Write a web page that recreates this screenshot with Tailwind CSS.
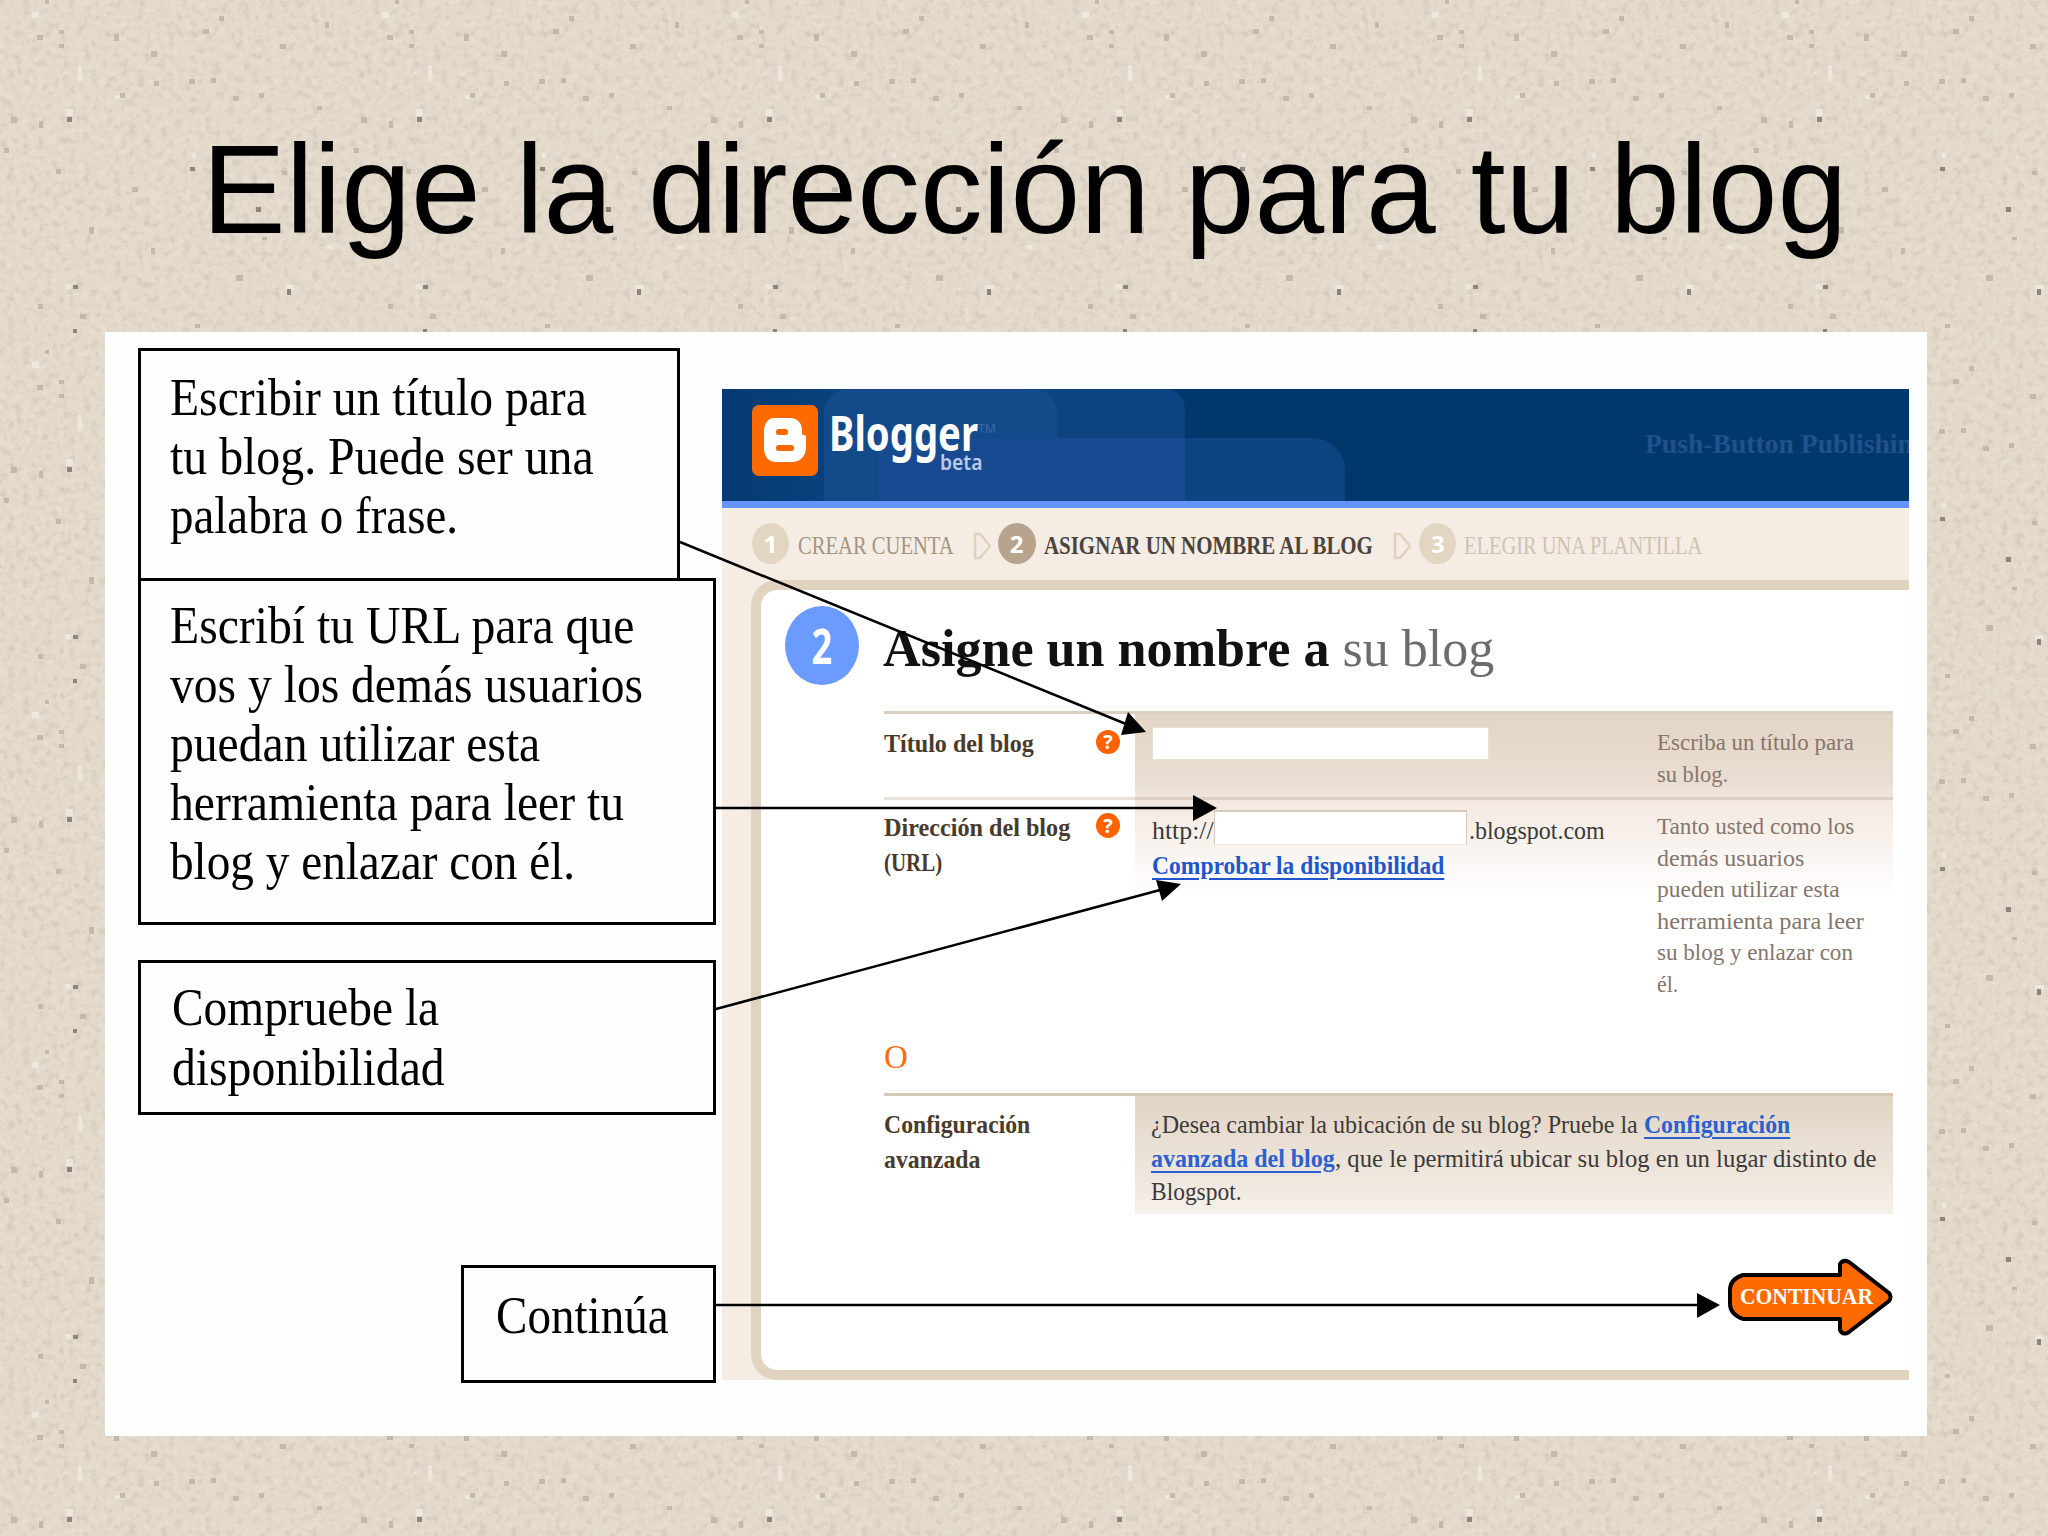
<!DOCTYPE html>
<html lang="es">
<head>
  <meta charset="UTF-8" />
  <meta name="viewport" content="width=device-width, initial-scale=1.0" />
  <title>Elige la dirección para tu blog</title>
  <script src="https://cdn.jsdelivr.net/npm/@tailwindcss/browser@4"></script>
</head>
<body class="relative w-[2048px] h-[1536px] overflow-hidden bg-[#e3dacc] font-['Liberation_Serif',serif] text-black">
  <!-- paper texture -->
  <svg class="absolute inset-0" width="2048" height="1536">
    <defs>
      <filter id="grain" x="0" y="0" width="100%" height="100%" color-interpolation-filters="sRGB">
        <feTurbulence type="fractalNoise" baseFrequency="0.13" numOctaves="3" seed="4" stitchTiles="stitch" />
        <feColorMatrix values="0 0 0 0 0.55  0 0 0 0 0.5  0 0 0 0 0.43  0.5 0 0 0 -0.24" />
      </filter>
      <filter id="light" x="0" y="0" width="100%" height="100%" color-interpolation-filters="sRGB">
        <feTurbulence type="fractalNoise" baseFrequency="0.14" numOctaves="3" seed="9" stitchTiles="stitch" />
        <feColorMatrix values="0 0 0 0 0.95  0 0 0 0 0.92  0 0 0 0 0.86  0 0.9 0 0 -0.43" />
      </filter>
      <pattern id="paper" width="350" height="350" patternUnits="userSpaceOnUse">
        <rect width="350" height="350" filter="url(#grain)" />
        <rect width="350" height="350" filter="url(#light)" />
        <g fill="#eee8da">
          <rect x="66" y="109" width="7" height="7" /><rect x="78" y="65" width="4" height="16" /><rect x="66" y="284" width="5" height="5" />
          <rect x="285" y="285" width="9" height="5" /><rect x="192" y="153" width="4" height="5" /><rect x="327" y="245" width="6" height="4" />
          <rect x="32" y="12" width="7" height="6" /><rect x="115" y="95" width="7" height="4" />
        </g>
        <g fill="#8d8578">
          <rect x="67" y="117" width="5" height="5" /><rect x="73" y="285" width="5" height="4" /><rect x="287" y="289" width="4" height="6" />
          <rect x="256" y="207" width="5" height="5" /><rect x="190" y="167" width="5" height="4" /><rect x="73" y="329" width="4" height="4" />
        </g>
        <g fill="#c2b9aa">
          <rect x="11" y="117" width="6" height="6" /><rect x="39" y="121" width="4" height="7" /><rect x="151" y="51" width="6" height="6" />
          <rect x="189" y="79" width="6" height="5" /><rect x="211" y="78" width="5" height="5" /><rect x="37" y="35" width="6" height="5" />
          <rect x="59" y="30" width="5" height="4" /><rect x="59" y="44" width="5" height="4" /><rect x="114" y="34" width="5" height="7" />
          <rect x="154" y="81" width="5" height="5" /><rect x="120" y="93" width="5" height="5" /><rect x="233" y="96" width="6" height="5" />
          <rect x="4" y="148" width="5" height="5" /><rect x="56" y="169" width="5" height="5" /><rect x="132" y="187" width="6" height="5" />
          <rect x="89" y="227" width="5" height="7" /><rect x="151" y="248" width="4" height="6" /><rect x="236" y="275" width="7" height="6" />
          <rect x="38" y="304" width="5" height="5" /><rect x="80" y="314" width="6" height="5" /><rect x="203" y="29" width="6" height="5" />
          <rect x="219" y="16" width="5" height="5" /><rect x="325" y="22" width="4" height="6" /><rect x="280" y="44" width="6" height="5" />
          <rect x="45" y="0" width="4" height="4" /><rect x="282" y="171" width="5" height="4" /><rect x="259" y="93" width="5" height="5" />
          <rect x="317" y="106" width="5" height="4" /><rect x="262" y="237" width="5" height="3" /><rect x="195" y="324" width="5" height="4" />
        </g>
      </pattern>
    </defs>
    <rect width="2048" height="1536" fill="url(#paper)" />
  </svg>

  <h1 class="relative pt-[124px] pl-[202px] h-[332px] font-['Liberation_Sans',sans-serif] text-[127px] leading-[130px]">
    <span class="fit inline-block origin-left whitespace-nowrap" data-w="1645">Elige la dirección para tu blog</span>
  </h1>

  <main class="relative flex ml-[105px] w-[1822px] h-[1104px] bg-[#fdfffe]">
    <!-- callouts -->
    <div class="flex flex-col w-[578px] ml-[33px] mr-[6px] pt-4 shrink-0 text-[52px]">
      <div class="w-[542px] h-[233px] border-3 border-black pt-[17px] pl-[29px] leading-[59px]">
        <div><span class="fit inline-block origin-left whitespace-nowrap" data-w="417">Escribir un título para</span></div>
        <div><span class="fit inline-block origin-left whitespace-nowrap" data-w="424">tu blog. Puede ser una</span></div>
        <div><span class="fit inline-block origin-left whitespace-nowrap" data-w="288">palabra o frase.</span></div>
      </div>
      <div class="w-[578px] h-[347px] -mt-[3px] border-3 border-black pt-[15px] pl-[29px] leading-[59px]">
        <div><span class="fit inline-block origin-left whitespace-nowrap" data-w="464">Escribí tu URL para que</span></div>
        <div><span class="fit inline-block origin-left whitespace-nowrap" data-w="473">vos y los demás usuarios</span></div>
        <div><span class="fit inline-block origin-left whitespace-nowrap" data-w="370">puedan utilizar esta</span></div>
        <div><span class="fit inline-block origin-left whitespace-nowrap" data-w="454">herramienta para leer tu</span></div>
        <div><span class="fit inline-block origin-left whitespace-nowrap" data-w="405">blog y enlazar con él.</span></div>
      </div>
      <div class="w-[578px] h-[155px] mt-[35px] border-3 border-black pt-[15px] pl-[31px] leading-[60px]">
        <div><span class="fit inline-block origin-left whitespace-nowrap" data-w="267">Compruebe la</span></div>
        <div><span class="fit inline-block origin-left whitespace-nowrap" data-w="273">disponibilidad</span></div>
      </div>
      <div class="w-[255px] h-[118px] mt-[150px] self-end border-3 border-black pt-[18px] pl-[32px] leading-[60px]">
        <span class="fit inline-block origin-left whitespace-nowrap" data-w="173">Continúa</span>
      </div>
    </div>

    <!-- blogger window -->
    <section class="w-[1187px] h-[991px] mt-[57px] shrink-0 bg-[#f5ece4] overflow-hidden">
      <header class="relative h-[119px] border-b-[7px] border-[#6494ff] bg-[#01386c] overflow-hidden">
        <div class="absolute left-0 top-0 w-[463px] h-[112px] rounded-tr-[20px] bg-linear-to-r from-[#053a70] to-[#0c4380] to-30%"></div>
        <div class="absolute left-[102px] top-0 w-[233px] h-[112px] rounded-t-[24px] bg-[#134a8a]"></div>
        <div class="absolute left-[156px] top-[49px] w-[467px] h-[63px] rounded-tr-[32px] bg-[#0c4380]"></div>
        <div class="absolute left-[156px] top-[49px] w-[307px] h-[63px] bg-[#174a90]"></div>
        <div class="relative flex pt-4 pl-[30px]">
          <svg class="shrink-0" width="66" height="71" viewBox="0 0 66 71">
            <rect width="66" height="71" rx="7" fill="#ff6a00" />
            <path fill="#fff" d="M22 13h16c8 0 12 6 12 12v3c0 2 1 2 2 2 2 0 2 1 2 2v11c0 8-6 14-14 14H24c-8 0-12-6-12-14V26c0-7 4-13 10-13Z" />
            <rect x="24" y="24" width="12" height="6" rx="2.5" fill="#ff6a00" />
            <rect x="24" y="40" width="18" height="6" rx="2.5" fill="#ff6a00" />
          </svg>
          <div class="ml-[11px] mt-[4px] font-['Noto_Sans',sans-serif]">
            <div class="flex">
              <span class="fit inline-block origin-left whitespace-nowrap text-[48px] leading-[48px] font-bold text-white" data-w="149">Blogger</span>
              <span class="fit inline-block origin-left text-[13px] leading-[38px] text-[#3d6aa3]" data-w="18">TM</span>
            </div>
            <span class="fit block w-max ml-[111px] -mt-[7px] origin-left text-[22px] leading-[22px] font-semibold text-[#b9cbe6]" data-w="42">beta</span>
          </div>
          <div class="ml-auto mt-[25px] w-[264px] text-[27px] leading-[28px] font-bold text-[#20518a]">
            <span class="fit inline-block origin-left whitespace-nowrap" data-w="268">Push-Button Publishin</span>
          </div>
        </div>
      </header>

      <nav class="flex h-[72px] pt-[15px] pl-[30px] text-[26px] leading-[46px]">
        <div class="w-[37px] h-[41px] shrink-0 rounded-[50%] bg-[#e2d5c2] text-white text-center text-[24px] leading-[41px] font-bold font-['Open_Sans',sans-serif]">1</div>
        <span class="fit inline-block origin-left whitespace-nowrap ml-[9px] text-[#a3957f]" data-w="156">CREAR CUENTA</span>
        <svg class="ml-[19px] mt-[9px] shrink-0" width="19" height="28" viewBox="0 0 19 28"><path d="M2 2h5l10 12L7 26H2Z" fill="none" stroke="#dfd2bd" stroke-width="2.5" /></svg>
        <div class="ml-[6px] w-[38px] h-[41px] shrink-0 rounded-[50%] bg-[#b8a48c] text-white text-center text-[24px] leading-[41px] font-bold font-['Open_Sans',sans-serif]">2</div>
        <span class="fit inline-block origin-left whitespace-nowrap ml-2 font-bold text-[#4a443c]" data-w="329">ASIGNAR UN NOMBRE AL BLOG</span>
        <svg class="ml-[21px] mt-[9px] shrink-0" width="19" height="28" viewBox="0 0 19 28"><path d="M2 2h5l10 12L7 26H2Z" fill="none" stroke="#dfd2bd" stroke-width="2.5" /></svg>
        <div class="ml-[7px] w-[37px] h-[41px] shrink-0 rounded-[50%] bg-[#e2d5c2] text-white text-center text-[24px] leading-[41px] font-bold font-['Open_Sans',sans-serif]">3</div>
        <span class="fit inline-block origin-left whitespace-nowrap ml-2 text-[#cdc3b2]" data-w="238">ELEGIR UNA PLANTILLA</span>
      </nav>

      <div class="ml-[29px] h-[800px] border-y-10 border-l-10 border-[#e0d3c0] rounded-l-[26px] bg-white pt-4 pl-6">
        <div class="flex h-[105px]">
          <div class="w-[74px] h-[79px] shrink-0 rounded-[50%] bg-[#6b9bff] text-center text-white text-[48px] leading-[79px] font-bold font-['Open_Sans',sans-serif]">
            <span class="inline-block scale-x-75">2</span>
          </div>
          <h2 class="flex ml-[24px] mt-[13px] text-[52px] leading-[60px]">
            <span class="fit inline-block origin-left whitespace-nowrap font-bold text-[#111]" data-w="446">Asigne un nombre a</span>
            <span class="fit inline-block origin-left whitespace-nowrap ml-[13px] text-[#6c6c6c]" data-w="152">su blog</span>
          </h2>
        </div>

        <div class="ml-[99px] w-[1009px]">
          <div class="h-[328px] bg-[linear-gradient(#e2d5c5,#e9ddd1_70px,#f3e9e2_92px,#ffffff_185px)] bg-no-repeat [background-position:251px_0]">
            <div class="flex items-start h-[86px] border-t-3 border-[#d8cfc2] pt-3">
              <div class="w-[212px] shrink-0 text-[26px] leading-[36px] font-bold text-[#4a3a2a]">
                <span class="fit inline-block origin-left whitespace-nowrap" data-w="150">Título del blog</span>
              </div>
              <div class="w-6 h-6 mt-1 shrink-0 rounded-full bg-[#ff6200] text-white text-center text-[20px] leading-[24px] font-bold font-['Open_Sans',sans-serif]">?</div>
              <div class="w-[337px] h-[33px] ml-8 mt-[1px] shrink-0 bg-white border border-[#eadfd2]"></div>
              <div class="ml-[168px] text-[24px] leading-[32px] text-[#86766a]">
                <div><span class="fit inline-block origin-left whitespace-nowrap" data-w="197">Escriba un título para</span></div>
                <div><span class="fit inline-block origin-left whitespace-nowrap" data-w="71">su blog.</span></div>
              </div>
            </div>
            <div class="flex items-start border-t-3 border-[#a08c78]/25 pt-[10px]">
              <div class="w-[212px] shrink-0 text-[26px] leading-[35px] font-bold text-[#4a3a2a]">
                <div><span class="fit inline-block origin-left whitespace-nowrap" data-w="186">Dirección del blog</span></div>
                <div><span class="fit inline-block origin-left whitespace-nowrap" data-w="58">(URL)</span></div>
              </div>
              <div class="w-6 h-[25px] mt-[3px] shrink-0 rounded-[50%] bg-[#ff6200] text-white text-center text-[20px] leading-[25px] font-bold font-['Open_Sans',sans-serif]">?</div>
              <div class="ml-8 w-[505px] shrink-0 text-[25px] leading-[34px] text-[#3c3a38]">
                <div class="flex h-[39px]">
                  <span class="fit inline-block origin-left whitespace-nowrap mt-1" data-w="62">http://</span>
                  <div class="w-[253px] h-[35px] shrink-0 bg-white border-t-2 border-x border-b border-[#d8cabb] border-b-[#eeeae0]"></div>
                  <span class="fit inline-block origin-left whitespace-nowrap mt-1 ml-[2px]" data-w="136">.blogspot.com</span>
                </div>
                <span class="fit inline-block origin-left whitespace-nowrap font-bold text-[#1f56cc] underline decoration-2 underline-offset-4" data-w="292">Comprobar la disponibilidad</span>
              </div>
              <div class="text-[24px] leading-[31.5px] text-[#86766a] pt-px">
                <div><span class="fit inline-block origin-left whitespace-nowrap" data-w="197">Tanto usted como los</span></div>
                <div><span class="fit inline-block origin-left whitespace-nowrap" data-w="147">demás usuarios</span></div>
                <div><span class="fit inline-block origin-left whitespace-nowrap" data-w="183">pueden utilizar esta</span></div>
                <div><span class="fit inline-block origin-left whitespace-nowrap" data-w="207">herramienta para leer</span></div>
                <div><span class="fit inline-block origin-left whitespace-nowrap" data-w="196">su blog y enlazar con</span></div>
                <div><span class="fit inline-block origin-left whitespace-nowrap" data-w="21">él.</span></div>
              </div>
            </div>
          </div>

          <div class="h-[54px] text-[33px] leading-[36px] text-[#ff6a10]">O</div>

          <div class="flex items-start h-[120px] border-t-3 border-[#d6c8b8]">
            <div class="w-[251px] shrink-0 pt-[11px] text-[26px] leading-[35px] font-bold text-[#4a3a2a]">
              <div><span class="fit inline-block origin-left whitespace-nowrap" data-w="146">Configuración</span></div>
              <div><span class="fit inline-block origin-left whitespace-nowrap" data-w="96">avanzada</span></div>
            </div>
            <div class="w-[758px] h-[118px] shrink-0 pt-[12px] pl-4 bg-linear-to-b from-[#e1d4c4] to-[#f5f0ea] text-[25px] leading-[33.5px] text-[#3c3a38]">
              <div class="flex">
                <span class="fit inline-block origin-left whitespace-nowrap" data-w="487">¿Desea cambiar la ubicación de su blog? Pruebe la</span>
                <span class="fit inline-block origin-left whitespace-nowrap ml-[6px] font-bold text-[#2a60cf] underline decoration-2 underline-offset-4" data-w="146">Configuración</span>
              </div>
              <div class="flex">
                <span class="fit inline-block origin-left whitespace-nowrap font-bold text-[#2a60cf] underline decoration-2 underline-offset-4" data-w="184">avanzada del blog</span>
                <span class="fit inline-block origin-left whitespace-nowrap" data-w="541">, que le permitirá ubicar su blog en un lugar distinto de</span>
              </div>
              <div><span class="fit inline-block origin-left whitespace-nowrap" data-w="91">Blogspot.</span></div>
            </div>
          </div>

          <svg class="ml-auto mt-[45px]" width="166" height="80" viewBox="0 0 166 80">
            <path d="M16 17h97V6q3-5 9-2l40 31q3 4 0 8l-40 31q-6 4-9-2V61H16Q3 56 3 46V32Q3 21 16 17Z" fill="#ff6a00" stroke="#000" stroke-width="4" stroke-linejoin="round" />
            <text x="13" y="46" textLength="133" lengthAdjust="spacingAndGlyphs" font-size="24" font-weight="bold" fill="#fff">CONTINUAR</text>
          </svg>
        </div>
      </div>
    </section>
  </main>

  <!-- arrows from the callouts to the form -->
  <svg class="absolute inset-0" width="2048" height="1536" stroke="#000" stroke-width="2.5">
    <path d="M680 542 1126 724M716 808h480M716 1009 1160 890M716 1305h982" fill="none" />
    <path d="M1146 732 1128 712 1121 735ZM1217 808 1193 795v26ZM1181 884 1156 880 1162 901ZM1720 1305 1697 1293v25Z" stroke="none" />
  </svg>

  <script>
// squeeze every line of text to its own width
function fit(el) {
  const want = Number(el.dataset.w);
  const natural = el.offsetWidth;
  if (!natural) return;
  el.style.transform = 'scaleX(' + want / natural + ')';
  el.style.marginRight = (want - natural) + 'px';
}

// the font size may arrive late, so measure again when a line changes
const observer = new ResizeObserver(function (entries) {
  entries.forEach(function (entry) { fit(entry.target); });
});
document.querySelectorAll('.fit').forEach(function (el) {
  observer.observe(el);
});
  </script>
</body>
</html>
